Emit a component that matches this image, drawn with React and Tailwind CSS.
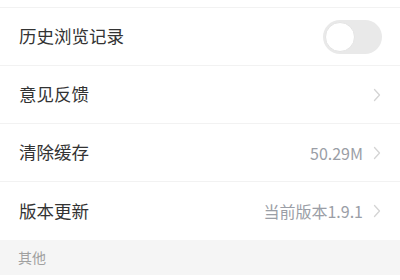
import { useState } from "react";

function Chevron() {
  return (
    <svg width="8" height="14" viewBox="0 0 8 14" fill="none" className="ml-[10px]">
      <path d="M1.5 1.5L6.5 7L1.5 12.5" stroke="#d4d4d4" strokeWidth="1.3" strokeLinecap="round" strokeLinejoin="round" />
    </svg>
  );
}

function Row({ label, value, chevron = true, children, last = false }) {
  return (
    <div className={`flex h-[58px] items-center justify-between pl-[19px] pr-[19px] bg-white ${last ? "" : "border-b border-[#f2f2f2]"}`}>
      <span className="text-[17.5px] text-[#333333]">{label}</span>
      <div className="flex items-center">
        {value && <span className="text-[16px] text-[#9a9ea6]">{value}</span>}
        {children}
        {chevron && <Chevron />}
      </div>
    </div>
  );
}

export default function App() {
  const [history, setHistory] = useState(false);

  return (
    <div className="w-[400px] h-[280px] bg-white overflow-hidden font-['Noto_Sans_CJK_SC','Noto_Sans',sans-serif]">
      <div className="h-[8px] bg-white border-b border-[#f2f2f2]"></div>
      <Row label="历史浏览记录" chevron={false}>
        <button
          onClick={() => setHistory(!history)}
          className={`flex h-[34px] w-[59px] items-center rounded-full p-[2px] mr-[-1px] ${history ? "bg-[#4cd964] justify-end" : "bg-[#e9e9e9] justify-start"}`}
        >
          <span className="h-[30px] w-[30px] rounded-full bg-white border border-[#e4e4e4]"></span>
        </button>
      </Row>
      <Row label="意见反馈" />
      <Row label="清除缓存" value="50.29M" />
      <Row label="版本更新" value="当前版本1.9.1" last />
      <div className="flex h-[35px] items-center bg-[#f5f5f5] pl-[18px]">
        <span className="text-[14px] text-[#a0a0a0]">其他</span>
      </div>
    </div>
  );
}
